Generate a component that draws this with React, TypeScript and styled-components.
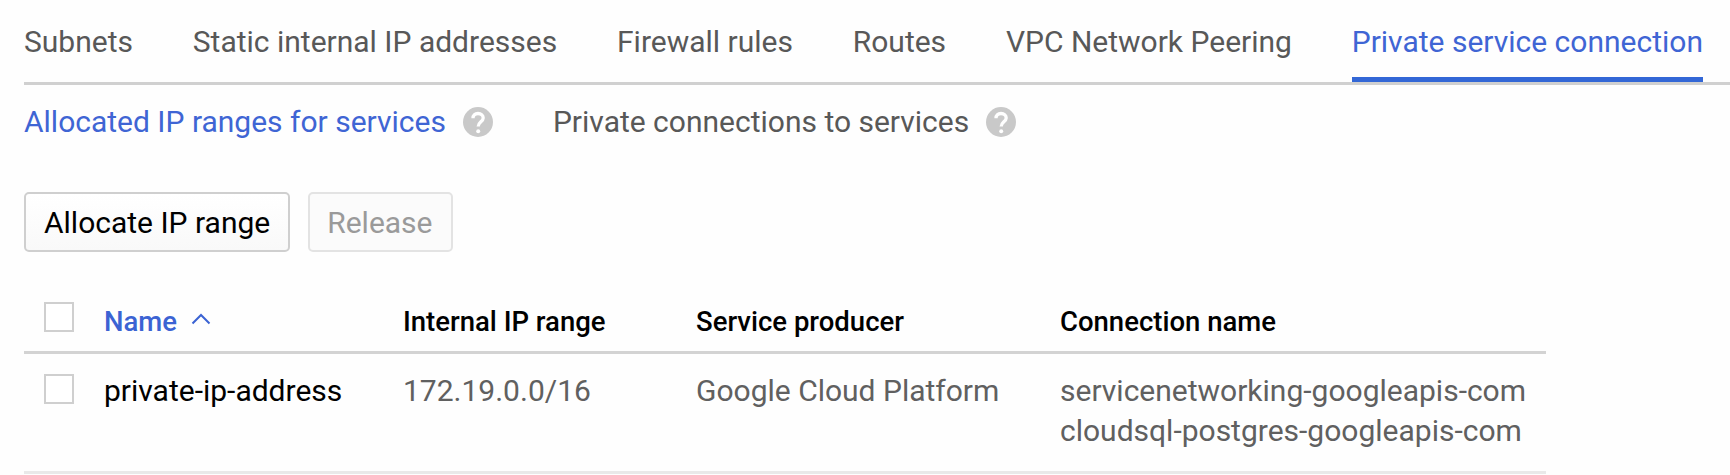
import React from 'react';
import styled, { createGlobalStyle } from 'styled-components';

const GlobalStyle = createGlobalStyle`
  * { box-sizing: border-box; }
  body { margin: 0; background: #fefefe; font-family: Roboto, sans-serif; font-size: 30px; color: #585858; overflow: hidden; }
`;

const Page = styled.main`
  height: 475px;
  padding-left: 24px;
  overflow: hidden;
  white-space: nowrap;
`;

const Tabs = styled.nav`
  display: flex;
  gap: 59.8px;
  height: 85px;
  border-bottom: 3px solid #d0d0d0;
`;

const Tab = styled.a<{ $active?: boolean }>`
  height: 82px;
  padding-top: 22px;
  line-height: 40px;
  color: ${p => (p.$active ? '#3f65d4' : '#585858')};
  border-bottom: ${p => (p.$active ? '5px solid #3367d6' : '0')};
`;

const SubTabs = styled.nav`
  display: flex;
  gap: 60px;
  padding-top: 17px;
  height: 107px;
`;

const SubTab = styled.a<{ $active?: boolean }>`
  display: flex;
  align-items: center;
  gap: 17px;
  height: 40px;
  line-height: 40px;
  color: ${p => (p.$active ? '#3f65d4' : '#585858')};
`;

const HelpSvg = styled.svg`
  width: 30px;
  height: 30px;
  flex: none;
`;

const Actions = styled.div`
  display: flex;
  gap: 18px;
`;

const Button = styled.button`
  height: 60px;
  padding: 1px 18px 0;
  border: 2px solid #cfcfcf;
  border-radius: 5px;
  background: linear-gradient(#fff, #f9f9f9);
  font: inherit;
  color: #000;

  &:disabled {
    padding: 1px 18px 0 17px;
    color: #9a9a9a;
    border-color: #e3e3e3;
    background: #fbfbfb;
  }
`;

const Table = styled.div`
  width: 1522px;
  margin-top: 29px;
`;

const Row = styled.div<{ $head?: boolean }>`
  display: grid;
  grid-template-columns: 60px 299px 293px 364px 1fr;
  padding: ${p => (p.$head ? '21px 0 0 20px' : '17px 0 0 20px')};
  height: ${p => (p.$head ? '73px' : '120px')};
  border-bottom: 3px solid ${p => (p.$head ? '#d3d3d3' : '#e9e9e9')};
`;

const HeadCell = styled.div<{ $sorted?: boolean }>`
  display: flex;
  gap: 14px;
  font-size: 27.5px;
  font-weight: 500;
  line-height: 40px;
  color: ${p => (p.$sorted ? '#3b63d3' : '#000')};
`;

const Cell = styled.div<{ $strong?: boolean }>`
  line-height: 40px;
  color: ${p => (p.$strong ? '#000' : '#606060')};
`;

const Checkbox = styled.span<{ $row?: boolean }>`
  width: 30px;
  height: 30px;
  margin-top: ${p => (p.$row ? '3px' : '0')};
  border: 2px solid #cfcfcf;
  background: #fff;
`;

const CaretSvg = styled.svg`
  width: 20px;
  height: 12px;
  margin-top: 11px;
`;

const Help = () => (
  <HelpSvg viewBox="0 0 30 30">
    <circle cx="15" cy="15" r="15" fill="#c9c9c9" />
    <path d="M10 11.2C10 8.2 12 6.5 15 6.5s5.2 1.8 5.2 4.4c0 3.8-5 4.2-5 8.7" fill="none" stroke="#fff" strokeWidth="3.3" />
    <circle cx="15.2" cy="24.3" r="2" fill="#fff" />
  </HelpSvg>
);

export default function App() {
  return (
    <>
      <GlobalStyle />
      <Page>
        <Tabs>
          <Tab>Subnets</Tab>
          <Tab>Static internal IP addresses</Tab>
          <Tab>Firewall rules</Tab>
          <Tab>Routes</Tab>
          <Tab>VPC Network Peering</Tab>
          <Tab $active>Private service connection</Tab>
        </Tabs>
        <SubTabs>
          <SubTab $active>Allocated IP ranges for services<Help /></SubTab>
          <SubTab>Private connections to services<Help /></SubTab>
        </SubTabs>
        <Actions>
          <Button>Allocate IP range</Button>
          <Button disabled>Release</Button>
        </Actions>
        <Table>
          <Row $head>
            <Checkbox />
            <HeadCell $sorted>
              Name
              <CaretSvg viewBox="0 0 20 12" fill="none" stroke="#3b63d3" strokeWidth="2">
                <path d="M1.5 10.5L10 2l8.5 8.5" />
              </CaretSvg>
            </HeadCell>
            <HeadCell>Internal IP range</HeadCell>
            <HeadCell>Service producer</HeadCell>
            <HeadCell>Connection name</HeadCell>
          </Row>
          <Row>
            <Checkbox $row />
            <Cell $strong>private-ip-address</Cell>
            <Cell>172.19.0.0/16</Cell>
            <Cell>Google Cloud Platform</Cell>
            <Cell>
              <div>servicenetworking-googleapis-com</div>
              <div>cloudsql-postgres-googleapis-com</div>
            </Cell>
          </Row>
        </Table>
      </Page>
    </>
  );
}
